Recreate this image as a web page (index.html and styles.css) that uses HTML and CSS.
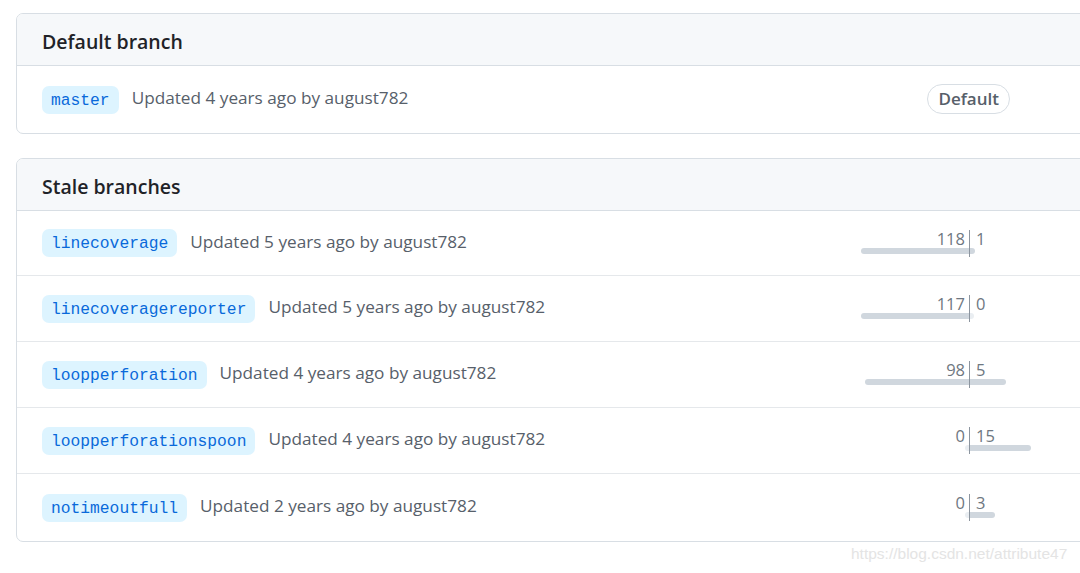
FILE: index.html
```html
<!DOCTYPE html>
<html lang="en">
  <head>
    <meta charset="utf-8">
    <title>Branches</title>
    <link rel="stylesheet" href="styles.css">
  </head>
  <body>
    <div class="page">
      <div class="box">
        <div class="box-header">Default branch</div>
        <div class="branch-row">
          <div class="branch-info">
            <span class="branch-name">master</span>
            <span class="updated">Updated 4 years ago by august782</span>
          </div>
          <span class="default-label">Default</span>
        </div>
      </div>

      <div class="box">
        <div class="box-header">Stale branches</div>

        <div class="branch-row">
          <div class="branch-info">
            <span class="branch-name">linecoverage</span>
            <span class="updated">Updated 5 years ago by august782</span>
          </div>
          <div class="counts">
            <div class="behind">
              <span class="count">118</span>
              <span class="bar" style="width: 108px"></span>
            </div>
            <div class="ahead">
              <span class="count">1</span>
              <span class="bar" style="width: 5px"></span>
            </div>
          </div>
        </div>

        <div class="branch-row">
          <div class="branch-info">
            <span class="branch-name">linecoveragereporter</span>
            <span class="updated">Updated 5 years ago by august782</span>
          </div>
          <div class="counts">
            <div class="behind">
              <span class="count">117</span>
              <span class="bar" style="width: 108px"></span>
            </div>
            <div class="ahead">
              <span class="count">0</span>
              <span class="bar empty" style="width: 4px"></span>
            </div>
          </div>
        </div>

        <div class="branch-row">
          <div class="branch-info">
            <span class="branch-name">loopperforation</span>
            <span class="updated">Updated 4 years ago by august782</span>
          </div>
          <div class="counts">
            <div class="behind">
              <span class="count">98</span>
              <span class="bar" style="width: 104px"></span>
            </div>
            <div class="ahead">
              <span class="count">5</span>
              <span class="bar" style="width: 36px"></span>
            </div>
          </div>
        </div>

        <div class="branch-row">
          <div class="branch-info">
            <span class="branch-name">loopperforationspoon</span>
            <span class="updated">Updated 4 years ago by august782</span>
          </div>
          <div class="counts">
            <div class="behind">
              <span class="count">0</span>
              <span class="bar empty" style="width: 4px"></span>
            </div>
            <div class="ahead">
              <span class="count">15</span>
              <span class="bar" style="width: 61px"></span>
            </div>
          </div>
        </div>

        <div class="branch-row">
          <div class="branch-info">
            <span class="branch-name">notimeoutfull</span>
            <span class="updated">Updated 2 years ago by august782</span>
          </div>
          <div class="counts">
            <div class="behind">
              <span class="count">0</span>
              <span class="bar empty" style="width: 4px"></span>
            </div>
            <div class="ahead">
              <span class="count">3</span>
              <span class="bar" style="width: 25px"></span>
            </div>
          </div>
        </div>
      </div>
    </div>
    <div class="watermark">https://blog.csdn.net/attribute47</div>
  </body>
</html>
```

FILE: styles.css
```css
html, body {
  margin: 0;
  background: #fff;
  overflow: hidden;
}
body {
  font-family: "Open Sans", "Noto Sans", sans-serif;
  color: #1f2328;
}
.page {
  padding: 13px 0 0 16px;
  width: 1120px;
  display: flex;
  flex-direction: column;
  gap: 24px;
}
.box {
  border: 1px solid #d8dee4;
  border-radius: 7px;
  overflow: hidden;
}
.box-header {
  background: #f6f8fa;
  height: 51px;
  line-height: 55px;
  padding-left: 25px;
  font-size: 19.5px;
  font-weight: 600;
  border-bottom: 1px solid #d8dee4;
}
.branch-row {
  display: flex;
  align-items: center;
  height: 65px;
  padding: 0 57px 0 25px;
  border-bottom: 1px solid #e5e8eb;
}
.box-header + .branch-row {
  height: 64px;
}
.box .branch-row:last-child {
  border-bottom: 0;
  height: 67px;
}
.branch-info {
  flex: 1;
  display: flex;
  align-items: center;
  gap: 13px;
}
.branch-name {
  font-family: "Liberation Mono", "DejaVu Sans Mono", monospace;
  font-size: 16.3px;
  color: #0969da;
  background: #ddf4ff;
  border-radius: 7px;
  height: 28px;
  line-height: 29px;
  padding: 0 9px;
}
.updated {
  font-size: 17.2px;
  color: #57606a;
  margin-top: -4px;
}
.default-label {
  margin-right: 68px;
  font-size: 17px;
  font-weight: 600;
  color: #57606a;
  border: 1px solid #d8dee4;
  border-radius: 15px;
  height: 28px;
  line-height: 28px;
  padding: 0 10px;
  margin-top: -1px;
}
.counts {
  display: flex;
}
.behind, .ahead {
  width: 108px;
  display: flex;
  flex-direction: column;
  height: 27px;
}
.behind {
  align-items: flex-end;
  border-right: 1px solid #8c959f;
}
.ahead {
  align-items: flex-start;
}
.count {
  font-size: 16.5px;
  line-height: 18px;
  color: #6e7781;
}
.behind .count {
  padding-right: 4px;
}
.ahead .count {
  padding-left: 6px;
}
.bar {
  display: block;
  height: 6px;
  background: #d0d7de;
}
.behind .bar {
  border-radius: 3px 0 0 3px;
}
.ahead .bar {
  border-radius: 0 3px 3px 0;
}
.bar.empty {
  background: #eaeef2;
}
.watermark {
  position: absolute;
  left: 851px;
  top: 545px;
  font-family: "Liberation Sans", Arial, sans-serif;
  font-size: 15.5px;
  color: #e4e4e4;
}
```
